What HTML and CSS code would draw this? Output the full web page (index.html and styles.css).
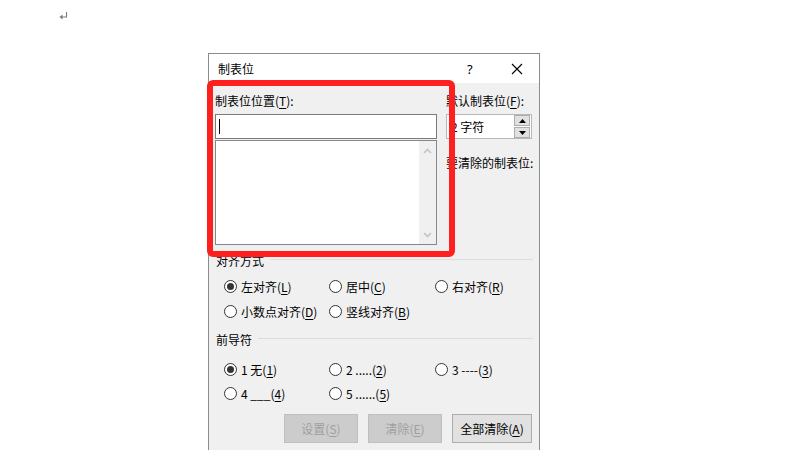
FILE: index.html
```html
<!DOCTYPE html>
<html lang="zh-CN">
<head>
<meta charset="utf-8">
<title>制表位</title>
<link rel="stylesheet" href="styles.css">
</head>
<body>
<svg class="pmark" width="10" height="10" viewBox="0 0 10 10"><path d="M7.5 1V6H2" fill="none" stroke="#7a7a7a" stroke-width="1.1"/><path d="M0.5 6L3.5 3.6V8.4Z" fill="#7a7a7a"/></svg>

<div class="dialog">
  <div class="titlebar">
    <span class="title">制表位</span>
    <span class="help">?</span>
    <svg class="close" width="12" height="12" viewBox="0 0 12 12"><path d="M1 1L11 11M11 1L1 11" stroke="#000" stroke-width="1.1"/></svg>
  </div>
  <div class="body">
    <div class="top">
      <div class="leftcol">
        <div class="label">制表位位置(<u>T</u>):</div>
        <div class="input"><span class="caret"></span></div>
        <div class="listbox">
          <div class="list"></div>
          <div class="vscroll">
            <svg width="9" height="6" viewBox="0 0 9 6"><path d="M1 5L4.5 1.5L8 5" fill="none" stroke="#c4c4c4" stroke-width="1.6"/></svg>
            <svg width="9" height="6" viewBox="0 0 9 6"><path d="M1 1L4.5 4.5L8 1" fill="none" stroke="#c4c4c4" stroke-width="1.6"/></svg>
          </div>
        </div>
      </div>
      <div class="rightcol">
        <div class="label">默认制表位(<u>F</u>):</div>
        <div class="spin">
          <span class="val">2 字符</span>
          <div class="spinbtns">
            <div class="sb"><svg width="7" height="4" viewBox="0 0 7 4"><path d="M0 4L3.5 0L7 4Z" fill="#000"/></svg></div>
            <div class="sb"><svg width="7" height="4" viewBox="0 0 7 4"><path d="M0 0L3.5 4L7 0Z" fill="#000"/></svg></div>
          </div>
        </div>
        <div class="label clearlbl">要清除的制表位:</div>
      </div>
    </div>

    <div class="group g1"><span>对齐方式</span><div class="line"></div></div>
    <div class="radios r1">
      <div class="radio"><span class="dot on"></span>左对齐(<u>L</u>)</div>
      <div class="radio"><span class="dot"></span>居中(<u>C</u>)</div>
      <div class="radio"><span class="dot"></span>右对齐(<u>R</u>)</div>
      <div class="radio"><span class="dot"></span>小数点对齐(<u>D</u>)</div>
      <div class="radio"><span class="dot"></span>竖线对齐(<u>B</u>)</div>
    </div>

    <div class="group g2"><span>前导符</span><div class="line"></div></div>
    <div class="radios r2">
      <div class="radio"><span class="dot on"></span>1&nbsp;无(<u>1</u>)</div>
      <div class="radio"><span class="dot"></span>2 .....(<u>2</u>)</div>
      <div class="radio"><span class="dot"></span>3 ----(<u>3</u>)</div>
      <div class="radio"><span class="dot"></span>4 ___(<u>4</u>)</div>
      <div class="radio"><span class="dot"></span>5 ......(<u>5</u>)</div>
    </div>

    <div class="buttons">
      <div class="btn disabled">设置(<u>S</u>)</div>
      <div class="btn disabled">清除(<u>E</u>)</div>
      <div class="btn wide">全部清除(<u>A</u>)</div>
    </div>
  </div>
</div>

<div class="annot"></div>
</body>
</html>
```

FILE: styles.css
```css
html, body {
  margin: 0;
  padding: 0;
  background: #ffffff;
  width: 800px;
  height: 450px;
  overflow: hidden;
  font-family: "Noto Sans CJK SC", "Noto Sans", sans-serif;
  font-size: 12px;
  color: #000;
}

.pmark {
  position: absolute;
  left: 59px;
  top: 11px;
}

.dialog {
  position: absolute;
  left: 208px;
  top: 53px;
  width: 330px;
  height: 396px;
  overflow: hidden;
  border: 1px solid #8c8c8c;
  border-bottom: none;
  background: #f0f0f0;
}

.titlebar {
  height: 29px;
  background: #ffffff;
  display: flex;
  align-items: center;
  padding-left: 9px;
  position: relative;
}
.title { line-height: 16px; margin-top: 1px; }
.help {
  position: absolute;
  left: 258px;
  top: 6px;
  font-family: "Noto Sans", sans-serif;
  font-size: 13px;
}
.close {
  position: absolute;
  left: 302px;
  top: 9px;
}

.body {
  padding: 10px 6px 0 6px;
}

u { text-decoration: underline; text-underline-offset: 2px; }

.label { line-height: 16px; height: 16px; white-space: nowrap; }

.top {
  display: flex;
  gap: 9px;
}
.leftcol { width: 222px; }
.rightcol { width: 86px; }

.input {
  margin-top: 5px;
  height: 23px;
  border: 1px solid #7a7a7a;
  background: #fff;
  display: flex;
  align-items: center;
  padding-left: 3px;
}
.caret {
  width: 1px;
  height: 15px;
  background: #000;
}

.listbox {
  margin-top: 1px;
  height: 103px;
  border: 1px solid #828790;
  background: #fff;
  display: flex;
}
.list { flex: 1; }
.vscroll {
  width: 17px;
  background: #f0f0f0;
  display: flex;
  flex-direction: column;
  justify-content: space-between;
  align-items: center;
  padding: 7px 0 6px 0;
}

.spin {
  margin-top: 5px;
  height: 23px;
  border: 1px solid #b8b8b8;
  background: #fff;
  display: flex;
  align-items: center;
  justify-content: space-between;
  padding-left: 4px;
}
.val { line-height: 16px; }
.spinbtns {
  display: flex;
  flex-direction: column;
  gap: 1px;
  padding-right: 1px;
}
.sb {
  width: 14px;
  height: 9px;
  border: 1px solid #adadad;
  background: #e1e1e1;
  display: flex;
  align-items: center;
  justify-content: center;
}
.clearlbl { margin-top: 16px; }

.group {
  display: flex;
  align-items: center;
  gap: 6px;
  height: 16px;
  line-height: 16px;
  padding-left: 1px;
}
.group .line {
  flex: 1;
  height: 1px;
  background: #dcdcdc;
  margin-top: -3px;
}
.g1 { margin-top: 8px; }
.g2 { margin-top: 11px; }

.radios {
  display: grid;
  grid-template-columns: 105px 106px auto;
  row-gap: 5px;
  padding-left: 9px;
}
.r1 { margin-top: 7px; }
.r2 { margin-top: 11px; row-gap: 4px; }

.radio {
  display: flex;
  align-items: center;
  height: 20px;
  white-space: nowrap;
}
.dot {
  width: 11px;
  height: 11px;
  border: 1px solid #333;
  border-radius: 50%;
  background: #fff;
  margin-right: 4px;
  display: flex;
  align-items: center;
  justify-content: center;
  flex: none;
}
.dot.on::after {
  content: "";
  width: 7px;
  height: 7px;
  border-radius: 50%;
  background: #333;
}

.buttons {
  margin-top: 11px;
  display: flex;
  justify-content: flex-end;
  gap: 10px;
  padding-right: 1px;
}
.btn {
  width: 72px;
  height: 27px;
  border: 1px solid #adadad;
  background: #e1e1e1;
  display: flex;
  align-items: center;
  justify-content: center;
}
.btn.wide { width: 78px; }
.btn.disabled {
  background: #cccccc;
  border-color: #bfbfbf;
  color: #a0a0a0;
}

.annot {
  position: absolute;
  left: 207px;
  top: 80px;
  width: 236px;
  height: 165px;
  border: 6px solid #fe1f1f;
  border-radius: 6px;
}
```
